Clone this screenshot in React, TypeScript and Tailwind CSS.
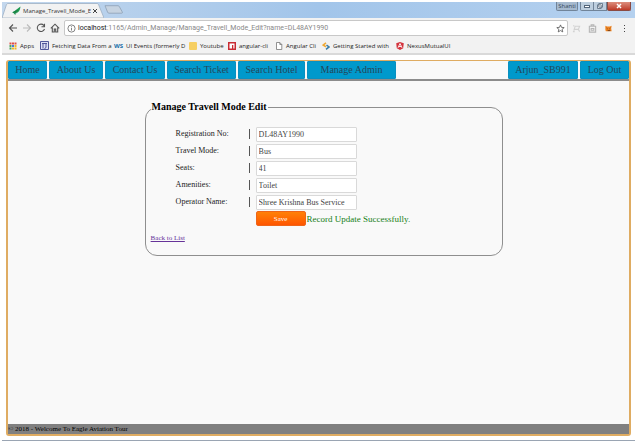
import { ReactNode } from "react";

const fields = [
  { id: "registration", label: "Registration No:", value: "DL48AY1990" },
  { id: "mode", label: "Travel Mode:", value: "Bus" },
  { id: "seats", label: "Seats:", value: "41" },
  { id: "amenities", label: "Amenities:", value: "Toilet" },
  { id: "operator", label: "Operator Name:", value: "Shree Krishna Bus Service" },
];

function Stroke({ d }: { d: string }) {
  return (
    <svg viewBox="0 0 10 10" className="size-[10px] shrink-0" fill="none" stroke="currentColor" strokeWidth="1.1" aria-hidden="true">
      <path d={d} />
    </svg>
  );
}

function TitleBar() {
  return (
    <div className="flex h-4 items-end bg-linear-to-r from-[#c3d7ed] via-[#a2c5ea] to-[#b5d1ef]">
      <div className="relative flex h-[15px] w-[102px] shrink-0 items-center pr-[6px] pl-[10px]">
        <svg viewBox="0 0 102 15" className="absolute inset-0 h-full w-full" aria-hidden="true">
          <path d="M0 15 4.500 1.500Q5 .5 6 .5H95Q96 .5 96.500 1.500L102 15Z" fill="#f2f2f2" stroke="#97a9bd" strokeWidth=".7" />
        </svg>
        <svg viewBox="0 0 9 9" className="relative mr-[2px] size-[9px] shrink-0" aria-hidden="true">
          <path d="M8.500.5C8 4 7 7 3.500 7L2 8.700 1.800 7 0 6.500 2.500 5Z" fill="#1d9a50" />
          <path d="M1 6.500 5.500 4.500M4 6l-.5 2.500" stroke="#176c3b" strokeWidth=".7" />
        </svg>
        <span className="relative w-[72px] text-[6px] leading-[10px] whitespace-nowrap text-[#333]">
          Manage_Travell_Mode_E
        </span>
        <button aria-label="Close tab" className="relative text-[#444]">
          <svg viewBox="0 0 6 6" className="size-[6px]" stroke="currentColor" strokeWidth="1" aria-hidden="true">
            <path d="m1 1 4 4m0-4-4 4" />
          </svg>
        </button>
      </div>
      <button aria-label="New tab" className="mb-1">
        <svg viewBox="0 0 19 9" className="h-[9px] w-[19px]" aria-hidden="true">
          <path d="M1 .7h13q1 0 1.400 1l3 5.500q.3 1-.8 1H5q-1 0-1.400-1Z" fill="#c6d3e1" stroke="#8799ae" strokeWidth=".7" />
        </svg>
      </button>
      <div className="mr-1 ml-auto flex h-[9px] self-start text-[#35475d]">
        <button className="mr-[2px] w-[22px] rounded-b-[2px] border border-t-0 border-[#718499] bg-[#a5b9ce] text-[6px] leading-[7px]">Shanti</button>
        <button aria-label="Minimize" className="flex w-[14px] items-center justify-center rounded-bl-[2px] border border-t-0 border-[#718499] bg-[#bdcede]">
          <span className="h-[3px] w-[6px] border border-[#52657a] bg-white" />
        </button>
        <button aria-label="Restore" className="flex w-[13px] items-center justify-center border-r border-b border-[#718499] bg-[#bdcede]">
          <svg viewBox="0 0 6 6" className="size-[6px]" fill="#fff" stroke="#52657a" strokeWidth=".8" aria-hidden="true">
            <path d="M1.800.5h3.700v3.700H1.800zM.5 1.800h3.700v3.700H.5z" />
          </svg>
        </button>
        <button aria-label="Close" className="flex w-6 items-center justify-center rounded-b-[2px] border border-t-0 border-[#8b4a42] bg-linear-to-b from-[#dc8d7d] to-[#bd3927] text-white">
          <svg viewBox="0 0 6 6" className="size-[6px]" stroke="currentColor" strokeWidth="1.500" aria-hidden="true">
            <path d="m1 1 4 4m0-4-4 4" />
          </svg>
        </button>
      </div>
    </div>
  );
}

function Toolbar() {
  return (
    <div className="flex h-5 items-center bg-[#f2f2f2] px-[6px] text-[#555]">
      <button aria-label="Back" className="mr-1"><Stroke d="M9 5H1.500M5 1.500 1.500 5 5 8.500" /></button>
      <button aria-label="Forward" className="mr-1 text-[#bbb]"><Stroke d="M1 5h7.500M5 1.500 8.500 5 5 8.500" /></button>
      <button aria-label="Reload" className="mr-1"><Stroke d="M8.500 6A3.700 3.700 0 1 1 7.800 2.400L8.500 3.500M8.500.8v3H5.500" /></button>
      <button aria-label="Home page" className="mr-1"><Stroke d="M.8 5.300 5 1.200l4.200 4.100M2.300 4.500V9h2V6h1.400v3h2V4.500" /></button>
      <div className="flex h-4 min-w-0 flex-1 items-center rounded-[2px] border border-[#c8c8c8] bg-white px-[2px]">
        <svg viewBox="0 0 10 10" className="mr-[2px] size-[9px] shrink-0" fill="none" stroke="#666" strokeWidth=".9" aria-hidden="true">
          <circle cx="5" cy="5" r="4" /><path d="M5 4.300v3M5 2.500v1" />
        </svg>
        <span className="flex-1 font-[Roboto,sans-serif] text-[7px] leading-[10px] whitespace-nowrap text-[#888]">
          <span className="text-[#222]">localhost</span>:1165/Admin_Manage/Manage_Travell_Mode_Edit?name=DL48AY1990
        </span>
        <button aria-label="Bookmark this page">
          <svg viewBox="0 0 10 10" className="size-[9px]" fill="none" stroke="#555" strokeWidth=".9" aria-hidden="true">
            <path d="m5 1 1.100 2.700 3 .3-2.300 1.900.7 2.900L5 7.300 2.500 8.800l.7-2.900L.9 4l3-.3Z" />
          </svg>
        </button>
      </div>
      <div className="ml-1 flex items-center gap-[7px]">
        <svg viewBox="0 0 10 10" className="size-[9px]" fill="none" stroke="#d2d2d2" strokeWidth="1.200" aria-hidden="true">
          <path d="M2 7.500 3.500 2.500h5L7 6H3M1 8.500h2M7 6l1.500 2.500M1.500 1.500l1 1" />
        </svg>
        <svg viewBox="0 0 10 10" className="size-[9px]" fill="none" stroke="#b5b5b5" strokeWidth="1.200" aria-hidden="true">
          <path d="M1.500 2.500h7v6.500h-7ZM3.500 2.500V1h3v1.500M3.500 5h3v2h-3Z" />
        </svg>
        <svg viewBox="0 0 10 10" className="size-[9px]" aria-hidden="true">
          <path d="m1.500 2 2 .8h3l2-.8-.5 3 .5 3H2L1.500 6Z" fill="#ee8422" />
          <path d="m3 4.500 1 1m3-1-1 1M4 7.300h3" stroke="#713d1b" strokeWidth="1" />
        </svg>
        <button aria-label="Browser menu" className="flex w-[9px] flex-col items-center gap-[2px]">
          <span className="size-px bg-[#444]" /><span className="size-px bg-[#444]" /><span className="size-px bg-[#444]" />
        </button>
      </div>
    </div>
  );
}

function Bookmark({ icon, children, className }: { icon: ReactNode; children: ReactNode; className: string }) {
  return (
    <a href="#" className={`flex shrink-0 items-center gap-[3px] ${className}`}>
      {icon}
      <span>{children}</span>
    </a>
  );
}

function Bookmarks() {
  return (
    <nav aria-label="Bookmarks" className="flex h-[17px] items-center border-b-2 border-[#d9d9d9] bg-[#f2f2f2] pl-[7px] text-[6px] leading-[10px] whitespace-nowrap text-[#222]">
      <Bookmark className="w-[31px]" icon={
        <svg viewBox="0 0 8 8" className="size-2 shrink-0" aria-hidden="true">
          <path d="M.5.500h2v2h-2zM3 .5h2v2H3zM5.500.5h2v2h-2z" fill="#df5144" />
          <path d="M.5 3h2v2h-2zM.5 5.500h2v2h-2z" fill="#4ca65a" />
          <path d="M3 3h2v2H3z" fill="#467ddb" />
          <path d="M5.500 3h2v2h-2zM3 5.500h2v2H3zM5.500 5.500h2v2h-2z" fill="#eeb928" />
        </svg>
      }>Apps</Bookmark>
      <Bookmark className="w-[74px]" icon={
        <svg viewBox="0 0 9 9" className="size-[9px] shrink-0" fill="none" stroke="#51579a" aria-hidden="true">
          <path d="M.5.500h8v8h-8z" fill="#dfe1f4" /><path d="M2 2.500h5M3 2.500v5M6 2.500V6q0 1.500-1.500 1.500" />
        </svg>
      }>Fetching Data From a</Bookmark>
      <Bookmark className="w-[75px]" icon={<span className="font-bold text-[#1870a8]">WS</span>}>UI Events (formerly D</Bookmark>
      <Bookmark className="w-[39px]" icon={<span className="size-2 shrink-0 rounded-[1px] bg-[#f6cf62]" />}>Youtube</Bookmark>
      <Bookmark className="w-[47px]" icon={
        <svg viewBox="0 0 8 8" className="size-2 shrink-0" aria-hidden="true">
          <path d="M0 0h8v8H0z" fill="#c92b32" /><path d="M1.500 1.500h5v5H5.300V3H4v3.500H1.500z" fill="#fff" />
        </svg>
      }>angular-cli</Bookmark>
      <Bookmark className="w-[47px]" icon={
        <svg viewBox="0 0 8 8" className="size-2 shrink-0" fill="#fff" stroke="#777" strokeWidth=".8" aria-hidden="true">
          <path d="M1.500.5h3.300l2 2v5H1.500zM4.800.5v2h2" />
        </svg>
      }>Angular Cli</Bookmark>
      <Bookmark className="w-[74px]" icon={
        <svg viewBox="0 0 8 8" className="size-2 shrink-0" fill="none" strokeWidth="1.600" aria-hidden="true">
          <path d="M4 .8 1.200 3 4 4.800" stroke="#efa936" /><path d="m4.500 3 2.500 2-3 2.300" stroke="#397eaa" />
        </svg>
      }>Getting Started with</Bookmark>
      <Bookmark className="w-[60px]" icon={
        <svg viewBox="0 0 8 8" className="size-2 shrink-0" aria-hidden="true">
          <path d="m4 0 3.800 1.300-.6 5L4 8 .8 6.300l-.6-5z" fill="#d3343d" /><path d="m2 5.800 2-4.300 2 4.300M3 4.500h2" fill="none" stroke="#fff" strokeWidth=".9" />
        </svg>
      }>NexusMutualUI</Bookmark>
    </nav>
  );
}

function NavLink({ children, className }: { children: ReactNode; className: string }) {
  return <a href="#" className={`shrink-0 rounded-[1px] border border-[#0a90c0] bg-[#0099cc] text-center ${className}`}>{children}</a>;
}

export default function App() {
  return (
    <div className="flex min-h-screen flex-col bg-white p-[2px] font-[Open_Sans,sans-serif]">
      <header>
        <TitleBar />
        <Toolbar />
        <Bookmarks />
      </header>
      <div className="mx-1 mt-[5px] flex flex-1 flex-col rounded-[3px] border-2 border-t border-[#dfac62] bg-[#f9f9f9] font-[Liberation_Serif,serif] text-[#222]">
        <nav aria-label="Main" className="flex gap-[2px] border-b-2 border-[#8c8c8c] text-[10px] leading-[16px] whitespace-nowrap text-[#24475a]">
          <NavLink className="w-[39px]">Home</NavLink>
          <NavLink className="w-[54px]">About Us</NavLink>
          <NavLink className="w-[60px]">Contact Us</NavLink>
          <NavLink className="w-[69px]">Search Ticket</NavLink>
          <NavLink className="w-[67px]">Search Hotel</NavLink>
          <NavLink className="w-[89px]">Manage Admin</NavLink>
          <span className="flex-1" />
          <NavLink className="w-[70px]">Arjun_SB991</NavLink>
          <NavLink className="w-[49px]">Log Out</NavLink>
        </nav>
        <main className="flex-1 pt-[19px]">
          <form onSubmit={(event) => event.preventDefault()}>
            <fieldset className="ml-[22%] w-[358px] max-w-[78%] rounded-[12px] border border-[#8f8f8f] pr-2 pb-3 pl-[5px]">
              <legend className="px-px text-[10px] leading-[14px] font-bold text-black">Manage Travell Mode Edit</legend>
              <div className="flex flex-col gap-px pt-3 pl-[25px]">
                {fields.map((field) => (
                  <div key={field.id} className="flex h-4 items-center text-[8px]">
                    <label htmlFor={field.id} className="w-[73px] leading-3">{field.label}</label>
                    <span className="mr-[6px] h-[10px] w-px bg-[#555]" />
                    <input id={field.id} defaultValue={field.value} className="h-[15px] w-[101px] rounded-[1px] border border-[#d9d9d9] bg-white px-[2px] text-[8px] leading-3 text-[#444]" />
                  </div>
                ))}
                <div className="flex items-center pl-20">
                  <button className="h-[15px] w-[50px] rounded-[2px] border border-[#ee6519] bg-linear-to-b from-[#ff8008] to-[#ff5500] text-[7px] leading-3 text-white">Save</button>
                  <output className="ml-px text-[9px] leading-3 text-[#168016]">Record Update Successfully.</output>
                </div>
              </div>
              <a href="#" className="mt-[7px] block w-fit text-[7px] leading-[10px] text-[#663399] underline">Back to List</a>
            </fieldset>
          </form>
        </main>
        <footer className="bg-[#808080] text-[7px] leading-[10px] text-black">© 2018 - Welcome To Eagle Aviation Tour</footer>
      </div>
      <div className="mt-1 h-px bg-[#9aa5b3]" />
    </div>
  );
}
